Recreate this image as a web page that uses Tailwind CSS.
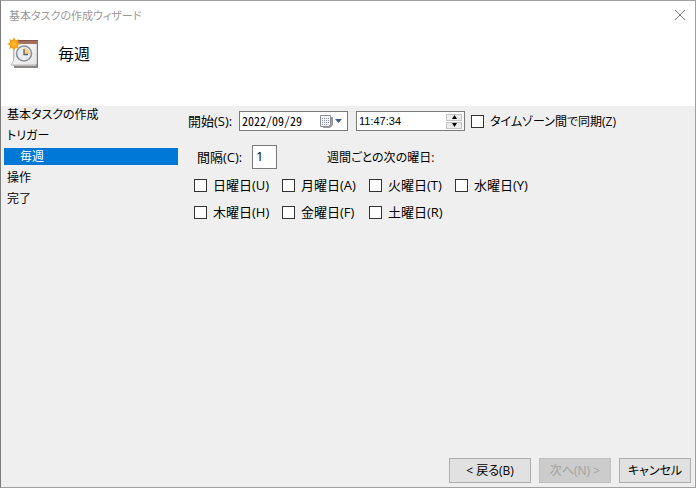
<!DOCTYPE html>
<html lang="ja">
<head>
<meta charset="utf-8">
<meta name="viewport" content="width=device-width, initial-scale=1">
<title>基本タスクの作成ウィザード</title>
<script src="https://cdn.jsdelivr.net/npm/@tailwindcss/browser@4"></script>
</head>
<body class="bg-[#a0a0a0]">
<div class="flex min-h-screen flex-col border border-[#a0a0a0] border-l-[#7c7c7c] bg-[#efefef] font-['Open_Sans','Noto_Sans_CJK_JP',sans-serif] text-[13px] leading-[17px] text-black [font-feature-settings:'palt']">
  <header class="h-[105px] bg-white">
    <div class="flex h-7 items-center justify-between pl-2 pr-[7px]">
      <h1 class="text-[11px] text-[#999999]">基本タスクの作成ウィザード</h1>
      <button type="button" aria-label="閉じる" class="flex size-4 items-center justify-center">
        <svg width="12" height="12" viewBox="0 0 12 12" fill="none" stroke="#777" stroke-width="1"><path d="M1 1l10 10M11 1L1 11"/></svg>
      </button>
    </div>
    <div class="flex items-center gap-[18px] pl-[6px] pt-2">
      <svg width="33" height="34" viewBox="0 0 33 34">
        <defs>
          <linearGradient id="page" x1="0" y1="0" x2="1" y2="1"><stop offset="0" stop-color="#fff"/><stop offset="1" stop-color="#e4e4e6"/></linearGradient>
          <radialGradient id="sun"><stop offset="0" stop-color="#ffc238"/><stop offset="1" stop-color="#f39a12"/></radialGradient>
        </defs>
        <path d="M7 8h24v23H7z" fill="#8b8887"/>
        <path d="M6 6h23v23H6z" fill="#c6c4c4"/>
        <path d="M7 5h23v22l-2 1H4q3-3 3-9z" fill="url(#page)" stroke="#aaa7a7" stroke-width=".7"/>
        <path d="M7 3h24v4H7z" fill="#a6705e"/>
        <path d="M7 3h24v1H7z" fill="#805548"/>
        <path d="M30 7h1v23h-1z" fill="#777"/>
        <circle cx="17" cy="16.500" r="7.500" fill="#e9edf1" stroke="#8b9299" stroke-width="1.600"/>
        <path d="M17 17v-6a6 6 0 0 1 6 6z" fill="#f7cf83"/>
        <path d="M17 12v5.500h4" fill="none" stroke="#59626b" stroke-width="1.300"/>
        <path d="M7 0l1.500 3.500L12 2l-1.500 3.500L14 7l-3.500 1.500L12 12l-3.500-1.500L7 14l-1.500-3.500L2 12l1.500-3.500L0 7l3.500-1.500L2 2l3.500 1.500z" fill="#f1a02a"/>
        <circle cx="7" cy="7" r="4.500" fill="url(#sun)"/>
      </svg>
      <h2 class="text-[16px] leading-6">毎週</h2>
    </div>
  </header>

  <div class="flex grow">
    <nav class="w-[177px] shrink-0 pl-[3px] text-[12px]">
      <ol class="flex flex-col gap-1">
        <li class="pl-[3px]">基本タスクの作成</li>
        <li class="pl-[3px]">トリガー</li>
        <li class="bg-[#0078d7] pl-4 text-white" aria-current="step">毎週</li>
        <li class="pl-[3px]">操作</li>
        <li class="pl-[3px]">完了</li>
      </ol>
    </nav>

    <main class="grow pl-[10px] pt-[5px]">
      <form>
        <div class="flex items-center">
          <label for="start-date" class="w-[51px]">開始(S):</label>
          <div class="flex h-5 w-[109px] items-center border border-[#7a7a7a] bg-white px-[2px]">
            <input id="start-date" type="text" value="2022/09/29" class="w-0 grow font-['Noto_Sans_CJK_JP',sans-serif] text-[12px] leading-4 outline-none [font-feature-settings:'hwid']">
            <button type="button" aria-label="カレンダー" class="flex items-center gap-px pr-[2px]">
              <svg width="13" height="13" viewBox="0 0 13 13"><path d="M3 2h10v8l-3 3H3z" fill="#9b9ba0"/><path d="M.5.5h10v9l-2 2h-8z" fill="#f4f4f6" stroke="#8b8e98"/><path d="M2 3.500h8M2 5.500h8M2 7.500h8M2 9.500h6" stroke="#9094a8" stroke-dasharray="1 1"/></svg>
              <svg width="9" height="5" viewBox="0 0 9 5"><path d="M1 0h7L4.500 4z" fill="#42598a"/></svg>
            </button>
          </div>
          <div class="ml-2 flex h-5 w-[109px] items-center border border-[#7a7a7a] bg-white px-[2px]">
            <input aria-label="開始時刻" type="text" value="11:47:34" class="w-0 grow font-['Liberation_Sans',sans-serif] text-[11px] leading-4 outline-none">
            <div class="flex flex-col gap-px">
              <button type="button" aria-label="増やす" class="flex h-[7px] w-4 items-center justify-center border border-[#c4c4c4] bg-[#ececec]"><svg width="7" height="4" viewBox="0 0 7 4"><path d="M1 4h5L3.500 0z"/></svg></button>
              <button type="button" aria-label="減らす" class="flex h-[7px] w-4 items-center justify-center border border-[#c4c4c4] bg-[#ececec]"><svg width="7" height="4" viewBox="0 0 7 4"><path d="M1 0h5L3.500 4z"/></svg></button>
            </div>
          </div>
          <label class="ml-[6px] flex items-center gap-[6px] text-[12px]"><input type="checkbox" class="size-[13px] appearance-none border border-[#333] bg-white">タイムゾーン間で同期(Z)</label>
        </div>

        <div class="mt-[14px] flex items-center pl-[9px]">
          <label for="interval" class="w-[55px]">間隔(C):</label>
          <input id="interval" type="text" value="1" class="h-6 w-[25px] border border-[#7a7a7a] bg-white px-[3px] pb-[2px] outline-none">
          <span class="ml-[50px] text-[12px]">週間ごとの次の曜日:</span>
        </div>

        <div class="mt-2 grid grid-cols-[88px_87px_86px_1fr] gap-y-[10px] pl-[6px]">
          <label class="flex items-center gap-[6px]"><input type="checkbox" class="size-[13px] appearance-none border border-[#333] bg-white">日曜日(U)</label>
          <label class="flex items-center gap-[6px]"><input type="checkbox" class="size-[13px] appearance-none border border-[#333] bg-white">月曜日(A)</label>
          <label class="flex items-center gap-[6px]"><input type="checkbox" class="size-[13px] appearance-none border border-[#333] bg-white">火曜日(T)</label>
          <label class="flex items-center gap-[6px]"><input type="checkbox" class="size-[13px] appearance-none border border-[#333] bg-white">水曜日(Y)</label>
          <label class="flex items-center gap-[6px]"><input type="checkbox" class="size-[13px] appearance-none border border-[#333] bg-white">木曜日(H)</label>
          <label class="flex items-center gap-[6px]"><input type="checkbox" class="size-[13px] appearance-none border border-[#333] bg-white">金曜日(F)</label>
          <label class="flex items-center gap-[6px]"><input type="checkbox" class="size-[13px] appearance-none border border-[#333] bg-white">土曜日(R)</label>
        </div>
      </form>
    </main>
  </div>

  <footer class="flex justify-end gap-2 pb-1 pr-1 text-[12px]">
    <button type="button" class="h-[25px] w-[82px] border border-[#adadad] bg-[#e1e1e1]">&lt; 戻る(B)</button>
    <button type="button" disabled class="h-[25px] w-[72px] border border-[#bfbfbf] bg-[#cccccc] text-[#a0a0a0]">次へ(N) &gt;</button>
    <button type="button" class="h-[25px] w-[72px] border border-[#adadad] bg-[#e1e1e1]">キャンセル</button>
  </footer>
</div>
</body>
</html>
